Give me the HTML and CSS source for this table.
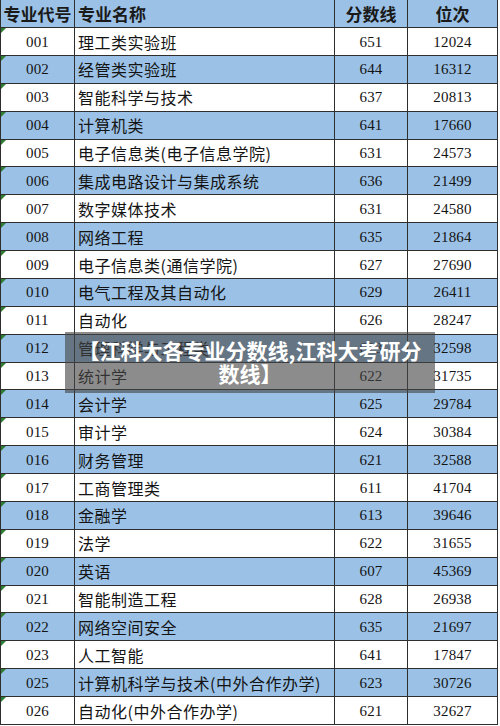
FILE: index.html
```html
<!DOCTYPE html>
<html lang="zh-CN">
<head>
<meta charset="utf-8">
<title>江科大各专业分数线</title>
<link rel="stylesheet" href="styles.css">
</head>
<body>
<div class="page">
  <div class="sheet">
    <div class="row head">
      <div class="cell c1">专业代号</div>
      <div class="cell c2">专业名称</div>
      <div class="cell c3">分数线</div>
      <div class="cell c4">位次</div>
    </div>
    <div class="row"><div class="cell c1 num">001</div><div class="cell c2">理工类实验班</div><div class="cell c3 num">651</div><div class="cell c4 num">12024</div></div>
    <div class="row alt"><div class="cell c1 num">002</div><div class="cell c2">经管类实验班</div><div class="cell c3 num">644</div><div class="cell c4 num">16312</div></div>
    <div class="row"><div class="cell c1 num">003</div><div class="cell c2">智能科学与技术</div><div class="cell c3 num">637</div><div class="cell c4 num">20813</div></div>
    <div class="row alt"><div class="cell c1 num">004</div><div class="cell c2">计算机类</div><div class="cell c3 num">641</div><div class="cell c4 num">17660</div></div>
    <div class="row"><div class="cell c1 num">005</div><div class="cell c2">电子信息类(电子信息学院)</div><div class="cell c3 num">631</div><div class="cell c4 num">24573</div></div>
    <div class="row alt"><div class="cell c1 num">006</div><div class="cell c2">集成电路设计与集成系统</div><div class="cell c3 num">636</div><div class="cell c4 num">21499</div></div>
    <div class="row"><div class="cell c1 num">007</div><div class="cell c2">数字媒体技术</div><div class="cell c3 num">631</div><div class="cell c4 num">24580</div></div>
    <div class="row alt"><div class="cell c1 num">008</div><div class="cell c2">网络工程</div><div class="cell c3 num">635</div><div class="cell c4 num">21864</div></div>
    <div class="row"><div class="cell c1 num">009</div><div class="cell c2">电子信息类(通信学院)</div><div class="cell c3 num">627</div><div class="cell c4 num">27690</div></div>
    <div class="row alt"><div class="cell c1 num">010</div><div class="cell c2">电气工程及其自动化</div><div class="cell c3 num">629</div><div class="cell c4 num">26411</div></div>
    <div class="row"><div class="cell c1 num">011</div><div class="cell c2">自动化</div><div class="cell c3 num">626</div><div class="cell c4 num">28247</div></div>
    <div class="row alt"><div class="cell c1 num">012</div><div class="cell c2">管理科学与工程类</div><div class="cell c3 num">623</div><div class="cell c4 num">32598</div></div>
    <div class="row"><div class="cell c1 num">013</div><div class="cell c2">统计学</div><div class="cell c3 num">622</div><div class="cell c4 num">31735</div></div>
    <div class="row alt"><div class="cell c1 num">014</div><div class="cell c2">会计学</div><div class="cell c3 num">625</div><div class="cell c4 num">29784</div></div>
    <div class="row"><div class="cell c1 num">015</div><div class="cell c2">审计学</div><div class="cell c3 num">624</div><div class="cell c4 num">30384</div></div>
    <div class="row alt"><div class="cell c1 num">016</div><div class="cell c2">财务管理</div><div class="cell c3 num">621</div><div class="cell c4 num">32588</div></div>
    <div class="row"><div class="cell c1 num">017</div><div class="cell c2">工商管理类</div><div class="cell c3 num">611</div><div class="cell c4 num">41704</div></div>
    <div class="row alt"><div class="cell c1 num">018</div><div class="cell c2">金融学</div><div class="cell c3 num">613</div><div class="cell c4 num">39646</div></div>
    <div class="row"><div class="cell c1 num">019</div><div class="cell c2">法学</div><div class="cell c3 num">622</div><div class="cell c4 num">31655</div></div>
    <div class="row alt"><div class="cell c1 num">020</div><div class="cell c2">英语</div><div class="cell c3 num">607</div><div class="cell c4 num">45369</div></div>
    <div class="row"><div class="cell c1 num">021</div><div class="cell c2">智能制造工程</div><div class="cell c3 num">628</div><div class="cell c4 num">26938</div></div>
    <div class="row alt"><div class="cell c1 num">022</div><div class="cell c2">网络空间安全</div><div class="cell c3 num">635</div><div class="cell c4 num">21697</div></div>
    <div class="row"><div class="cell c1 num">023</div><div class="cell c2">人工智能</div><div class="cell c3 num">641</div><div class="cell c4 num">17847</div></div>
    <div class="row alt"><div class="cell c1 num">025</div><div class="cell c2">计算机科学与技术(中外合作办学)</div><div class="cell c3 num">623</div><div class="cell c4 num">30726</div></div>
    <div class="row"><div class="cell c1 num">026</div><div class="cell c2">自动化(中外合作办学)</div><div class="cell c3 num">621</div><div class="cell c4 num">32627</div></div>
  </div>
  <div class="caption">【江科大各专业分数线,江科大考研分数线】</div>
</div>
</body>
</html>
```

FILE: styles.css
```css
html, body {
  margin: 0;
  padding: 0;
  background: #ffffff;
}

.page {
  position: relative;
  width: 500px;
  height: 726px;
  overflow: hidden;
}

.sheet {
  width: 498px;
  border-left: 1px solid #2e2e2e;
  box-sizing: border-box;
  font-family: "Noto Sans CJK SC", "Noto Sans", sans-serif;
  color: #141414;
}

.row {
  display: grid;
  grid-template-columns: 74px 260px 73px 90px;
  height: 27.88px;
  background: #ffffff;
}

.row.alt,
.row.head {
  background: #9bc2e6;
}

.row.head {
  height: 28.1px;
}

.cell {
  box-sizing: border-box;
  border-right: 1px solid #2e2e2e;
  border-bottom: 1px solid #2e2e2e;
  display: flex;
  align-items: center;
  justify-content: center;
  font-size: 16px;
  letter-spacing: 0.5px;
  white-space: nowrap;
  overflow: hidden;
  position: relative;
}

.head .cell {
  font-size: 17px;
  font-weight: 700;
  letter-spacing: 0;
  color: #1a1a1a;
}

.cell.c2 {
  justify-content: flex-start;
  padding-left: 3px;
}

.head .cell.c2 {
  padding-left: 3px;
}

.cell.num {
  font-family: "Liberation Serif", serif;
  font-size: 15px;
  letter-spacing: 0.2px;
  padding-top: 1px;
}

.row:not(.head) .c1::before {
  content: "";
  position: absolute;
  left: 0;
  top: 0;
  width: 0;
  height: 0;
  border-top: 5px solid #2f7d32;
  border-right: 5px solid transparent;
}

.caption {
  position: absolute;
  left: 65px;
  top: 332px;
  width: 370px;
  height: 61px;
  box-sizing: border-box;
  padding: 7px 12px 0;
  background: rgba(70, 70, 70, 0.62);
  color: #ffffff;
  font-family: "Noto Sans CJK SC", "Noto Sans", sans-serif;
  font-weight: 700;
  font-size: 21px;
  line-height: 23px;
  text-align: center;
}
```
